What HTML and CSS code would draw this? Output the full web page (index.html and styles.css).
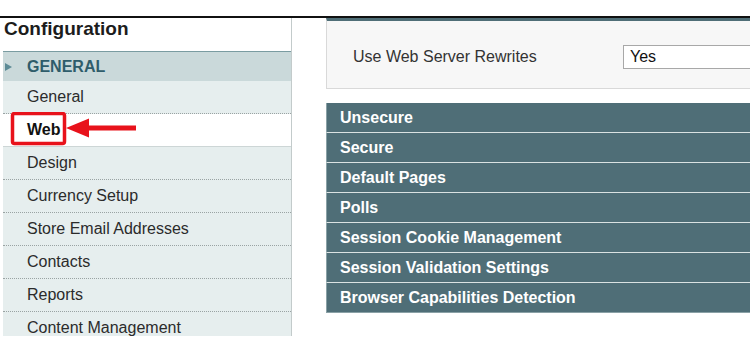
FILE: index.html
```html
<html>
<head>
    <meta charset="UTF-8">
    <title>Configuration</title>
    <link rel="stylesheet" href="styles.css">
</head>
<body>
    <div id="page">
        <div id="sidebar">
            <h1 class="side-title">Configuration</h1>
            <div class="side-group"><span class="arrow"></span>GENERAL</div>
            <ul class="side-list">
                <li class="side-item">General</li>
                <li class="side-item active">
                    <b>Web</b>
                    <svg class="callout" width="140" height="36" viewBox="0 0 140 36">
                        <rect x="9.5" y="1.5" width="52" height="30" rx="2" fill="none" stroke="#e8121b" stroke-width="3.5"/>
                        <path d="M63 16 L86 6.5 L86 13.5 L133 13.5 L133 18.5 L86 18.5 L86 25.5 Z" fill="#e8121b"/>
                    </svg>
                </li>
                <li class="side-item">Design</li>
                <li class="side-item">Currency Setup</li>
                <li class="side-item">Store Email Addresses</li>
                <li class="side-item">Contacts</li>
                <li class="side-item">Reports</li>
                <li class="side-item">Content Management</li>
            </ul>
        </div>

        <div id="main">
            <div class="fieldset">
                <label class="field-label">Use Web Server Rewrites</label>
                <div class="select">Yes</div>
            </div>
            <div class="section-bar">Unsecure</div>
            <div class="section-bar">Secure</div>
            <div class="section-bar">Default Pages</div>
            <div class="section-bar">Polls</div>
            <div class="section-bar">Session Cookie Management</div>
            <div class="section-bar">Session Validation Settings</div>
            <div class="section-bar">Browser Capabilities Detection</div>
        </div>
    </div>
</body>
</html>
```

FILE: styles.css
```css
body {
    margin: 0;
    padding-top: 16px;
    background-color: #fff;
    font-family: "Liberation Sans", Arial, sans-serif;
    color: #2b2b2b;
    overflow: hidden;
}

#page {
    display: flex;
    border-top: 2px solid #111;
    width: 750px;
}

#sidebar {
    flex-shrink: 0;
    margin-left: 3px;
    width: 288px;
    height: 318px;
    overflow: hidden;
    border-right: 1px solid #c3cbcb;
}

.side-title {
    margin: 0;
    height: 33px;
    padding-left: 1px;
    font-size: 19px;
    line-height: 22px;
    font-weight: bold;
    color: #1c1c1c;
}

.side-group {
    height: 29px;
    line-height: 29px;
    border-top: 1px solid #7a9ca1;
    background-color: #cad9da;
    color: #2f5d6b;
    font-size: 16px;
    font-weight: bold;
    padding-left: 24px;
    position: relative;
}

.arrow {
    position: absolute;
    left: 2px;
    top: 11px;
    border-left: 7px solid #5d8b96;
    border-top: 4px solid transparent;
    border-bottom: 4px solid transparent;
}

.side-list {
    list-style: none;
    margin: 0;
    padding: 0;
}

.side-item {
    height: 32px;
    line-height: 32px;
    padding-left: 24px;
    font-size: 16px;
    background-color: #e6eeee;
    border-bottom: 1px dotted #9aa3a3;
}

.side-item:last-child {
    border-bottom: none;
}

.side-item.active {
    background-color: #fff;
    border-bottom: 1px solid #cdd6d6;
    position: relative;
    color: #111;
}

.callout {
    position: absolute;
    left: 0;
    top: -2px;
}

#main {
    margin-left: 34px;
    flex: 1;
    min-width: 0;
}

.fieldset {
    display: flex;
    align-items: center;
    border-top: 3px solid #4f6e77;
    border-bottom: 1px solid #d9d9d9;
    border-left: 1px solid #d9d9d9;
    background-color: #f7f7f7;
    padding: 24px 0 19px 26px;
}

.field-label {
    width: 270px;
    flex-shrink: 0;
    font-size: 16px;
    color: #333;
}

.select {
    flex: 1;
    height: 22px;
    line-height: 22px;
    border: 1px solid #a8a8a8;
    border-right: none;
    background-color: #fff;
    padding-left: 6px;
    font-size: 16px;
    color: #111;
}

.fieldset + .section-bar {
    margin-top: 14px;
}

.section-bar {
    height: 29px;
    line-height: 29px;
    background-color: #4f6e77;
    border-bottom: 1px solid #dae2e2;
    border-left: 1px solid #8aa1a6;
    padding-left: 13px;
    color: #fff;
    font-size: 16px;
    font-weight: bold;
}

.section-bar:last-child {
    border-bottom-color: #8aa1a6;
}
```
